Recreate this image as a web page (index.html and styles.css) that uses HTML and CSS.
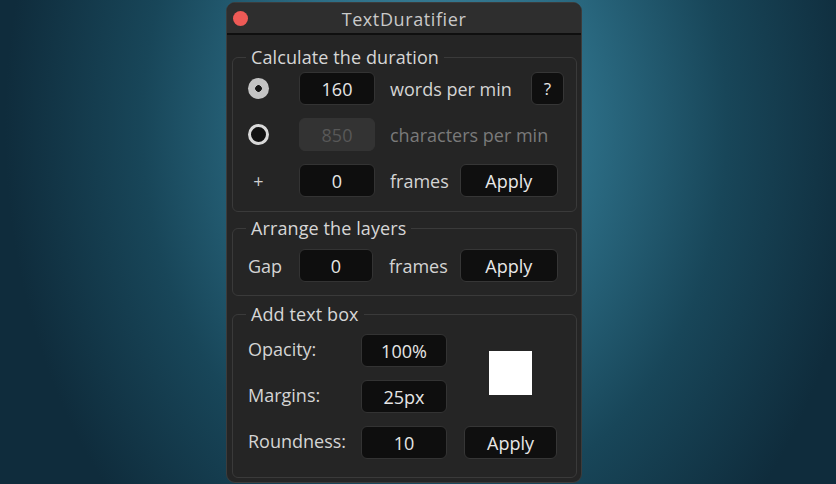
FILE: index.html
```html
<!DOCTYPE html>
<html>
<head>
<meta charset="utf-8">
<title>TextDuratifier</title>
<link rel="stylesheet" href="styles.css">
</head>
<body>
<div class="desktop">
  <div class="window">
    <div class="titlebar">
      <span class="close"></span>
      <span class="title">TextDuratifier</span>
    </div>
    <div class="content">
      <fieldset class="group group-duration">
        <legend>Calculate the duration</legend>
        <div class="row">
          <span class="lead"><span class="radio radio-on"></span></span>
          <span class="field">160</span>
          <span class="label">words per min</span>
          <span class="btn btn-help">?</span>
        </div>
        <div class="row">
          <span class="lead"><span class="radio radio-off"></span></span>
          <span class="field field-disabled">850</span>
          <span class="label label-disabled">characters per min</span>
        </div>
        <div class="row">
          <span class="lead"><span class="plus">+</span></span>
          <span class="field">0</span>
          <span class="label">frames</span>
          <span class="btn btn-apply">Apply</span>
        </div>
      </fieldset>

      <fieldset class="group group-arrange">
        <legend>Arrange the layers</legend>
        <div class="row">
          <span class="lead lead-text">Gap</span>
          <span class="field field-gap">0</span>
          <span class="label label-gap">frames</span>
          <span class="btn btn-apply btn-apply2">Apply</span>
        </div>
      </fieldset>

      <fieldset class="group group-box">
        <legend>Add text box</legend>
        <div class="box-grid">
          <span class="box-label">Opacity:</span>
          <span class="field field-box">100%</span>
          <span class="swatch"></span>
          <span class="box-label">Margins:</span>
          <span class="field field-box">25px</span>
          <span class="box-label">Roundness:</span>
          <span class="field field-box">10</span>
          <span class="btn btn-apply3">Apply</span>
        </div>
      </fieldset>
    </div>
  </div>
</div>
</body>
</html>
```

FILE: styles.css
```css
html, body {
  margin: 0;
  padding: 0;
}

body {
  width: 836px;
  height: 484px;
  overflow: hidden;
  font-family: "Open Sans", "Liberation Sans", sans-serif;
  background: radial-gradient(ellipse 430px 560px at 52% 26%, #4189a2 0%, #2c6d85 35%, #184659 68%, #0f2c3c 100%);
}

.desktop {
  width: 836px;
  height: 484px;
  padding-top: 2px;
  box-sizing: border-box;
}

.window {
  margin-left: 226px;
  width: 356px;
  height: 481px;
  box-sizing: border-box;
  background: #252525;
  border: 1px solid #3c3c3c;
  border-radius: 9px;
  overflow: hidden;
  display: flex;
  flex-direction: column;
}

.titlebar {
  height: 30px;
  flex: none;
  background: #2e2e2e;
  border-bottom: 2px solid #0f0f0f;
  display: flex;
  align-items: center;
  position: relative;
}

.close {
  width: 15px;
  height: 15px;
  border-radius: 50%;
  background: #ee5a56;
  margin-left: 6px;
  margin-top: 1px;
}

.title {
  position: absolute;
  left: 0;
  right: 0;
  top: 1px;
  text-align: center;
  line-height: 30px;
  font-size: 18px;
  color: #c9c9c9;
  letter-spacing: 0.6px;
}

.content {
  padding: 10px 4px 0 5px;
  display: flex;
  flex-direction: column;
}

.group {
  margin: 0;
  border: 1px solid #3a3a3a;
  border-radius: 6px;
  padding: 0 12px 0 15px;
  min-width: 0;
}

.group legend {
  margin-left: -2px;
  padding: 0 5px;
  font-size: 18px;
  line-height: 24px;
  color: #d6d6d6;
  letter-spacing: 0.1px;
}

.group-duration {
  padding-top: 3px;
  padding-bottom: 14px;
  display: flex;
  flex-direction: column;
  gap: 13px;
}

.group-arrange {
  margin-top: 4px;
  padding-top: 9px;
  padding-bottom: 13px;
}

.group-box {
  margin-top: 6px;
  padding-top: 8px;
  padding-bottom: 18px;
}

.row {
  display: flex;
  align-items: center;
  height: 33px;
}

.lead {
  width: 51px;
  flex: none;
  display: flex;
  align-items: center;
}

.lead-text {
  font-size: 18px;
  color: #d4d4d4;
}

.radio {
  width: 21px;
  height: 21px;
  border-radius: 50%;
  box-sizing: border-box;
  display: block;
}

.radio-on {
  background: radial-gradient(circle, #161616 0 3px, #c4c4c4 3.6px);
}

.radio-off {
  border: 3px solid #d9d9d9;
  background: #111;
}

.plus {
  width: 21px;
  text-align: center;
  font-size: 18px;
  color: #cfcfcf;
  line-height: 20px;
}

.field {
  width: 76px;
  height: 33px;
  flex: none;
  box-sizing: border-box;
  background: #0e0e0e;
  border: 1px solid #333;
  border-radius: 6px;
  color: #e6e6e6;
  font-size: 18px;
  display: flex;
  align-items: center;
  justify-content: center;
  padding-top: 1px;
}

.field-disabled {
  background: #333;
  border-color: #333;
  color: #585858;
}

.field-gap {
  width: 74px;
}

.label {
  margin-left: 15px;
  font-size: 18px;
  color: #d4d4d4;
  white-space: nowrap;
}

.label-disabled {
  color: #7a7a7a;
}

.label-gap {
  margin-left: 16px;
}

.btn {
  height: 33px;
  box-sizing: border-box;
  background: #0f0f0f;
  border: 1px solid #363636;
  border-radius: 6px;
  color: #e8e8e8;
  font-size: 18px;
  display: flex;
  align-items: center;
  justify-content: center;
  flex: none;
}

.btn-help {
  width: 33px;
  margin-left: auto;
  font-size: 17px;
}

.btn-apply {
  width: 98px;
  margin-left: 11px;
}

.btn-apply2 {
  margin-left: 12px;
}

.box-grid {
  display: grid;
  grid-template-columns: 113px 103px 93px;
  grid-template-rows: 33px 33px 33px;
  row-gap: 13px;
  align-items: center;
}

.box-label {
  font-size: 18px;
  color: #d4d4d4;
  margin-top: -3px;
}

.field-box {
  width: 86px;
}

.swatch {
  grid-column: 3;
  grid-row: 1 / span 2;
  justify-self: center;
  width: 43px;
  height: 44px;
  background: #ffffff;
  margin-top: -2px;
}

.btn-apply3 {
  grid-column: 3;
  grid-row: 3;
  width: 93px;
}
```
